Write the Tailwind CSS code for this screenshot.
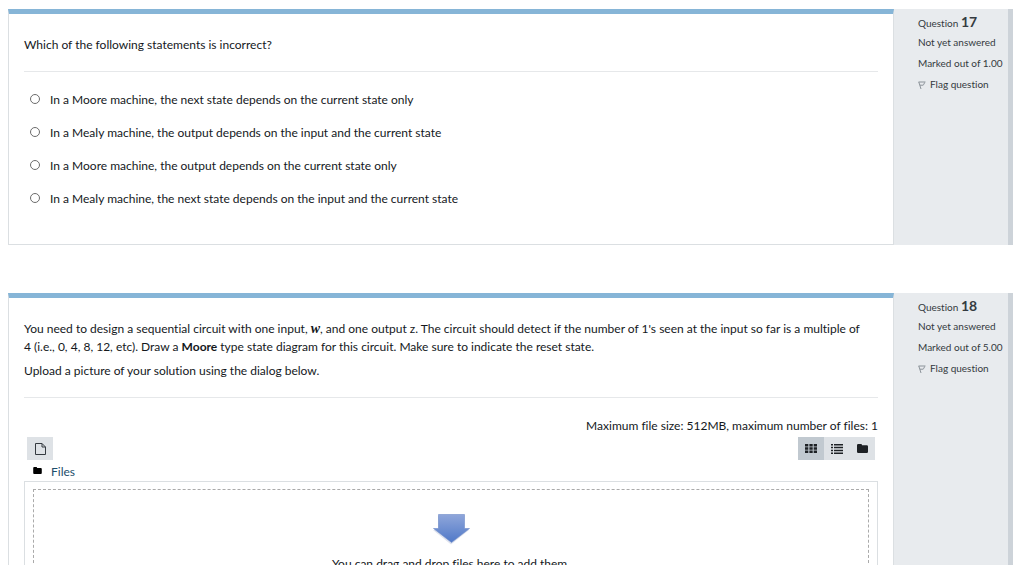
<!DOCTYPE html>
<html lang="en">
<head>
<meta charset="utf-8">
<title>Quiz</title>
<script src="https://cdn.jsdelivr.net/npm/@tailwindcss/browser@4"></script>
</head>
<body class="h-screen overflow-hidden bg-white font-[Lato,'Open_Sans',sans-serif] text-[12px] leading-[18px] text-[#14181c] [font-variant-ligatures:none]">
<main class="flex flex-col gap-12 pt-[9px] pr-[11px] pl-2">

  <section class="flex">
    <div class="min-w-0 flex-1 border border-t-5 border-[#dbdfe2] border-t-[#86b5d7] px-[15px] pt-[22px] pb-9">
      <p>Which of the following statements is incorrect?</p>
      <hr class="mt-[17px] border-[#e6e8ea]">
      <fieldset class="mt-[19px] flex flex-col gap-[15px] pl-[6px]">
        <label class="flex items-start gap-[10px]"><input type="radio" name="q17" class="mt-[3px] size-[10px] shrink-0 appearance-none rounded-full border border-[#6c6c6c] bg-white checked:bg-[#6c6c6c]">In a Moore machine, the next state depends on the current state only</label>
        <label class="flex items-start gap-[10px]"><input type="radio" name="q17" class="mt-[3px] size-[10px] shrink-0 appearance-none rounded-full border border-[#6c6c6c] bg-white checked:bg-[#6c6c6c]">In a Mealy machine, the output depends on the input and the current state</label>
        <label class="flex items-start gap-[10px]"><input type="radio" name="q17" class="mt-[3px] size-[10px] shrink-0 appearance-none rounded-full border border-[#6c6c6c] bg-white checked:bg-[#6c6c6c]">In a Moore machine, the output depends on the current state only</label>
        <label class="flex items-start gap-[10px]"><input type="radio" name="q17" class="mt-[3px] size-[10px] shrink-0 appearance-none rounded-full border border-[#6c6c6c] bg-white checked:bg-[#6c6c6c]">In a Mealy machine, the next state depends on the input and the current state</label>
      </fieldset>
    </div>
    <aside class="w-[119px] shrink-0 border-r-5 border-[#cdd3d9] bg-[#e8ebee] pt-1 pl-6 text-[10px] leading-[21px] whitespace-nowrap text-[#343a40]">
      <h3 class="leading-[17px]">Question <span class="text-[14px] font-bold">17</span></h3>
      <p>Not yet answered</p>
      <p>Marked out of 1.00</p>
      <a href="#" class="flex items-center gap-1"><svg class="size-2" viewBox="0 0 8 8" fill="none" stroke="#8b9299"><path d="M.8 1L3 8M.5 1H7.500M2 4.200H5Q6 4 6.500 1.500" /></svg>Flag question</a>
    </aside>
  </section>

  <section class="flex">
    <div class="min-w-0 flex-1 border border-t-5 border-[#dbdfe2] border-t-[#86b5d7] px-[15px] pt-[22px] pb-8">
      <p>You need to design a sequential circuit with one input, <i class="font-['Liberation_Serif',serif] text-[14px] leading-none font-bold">w</i>, and one output z. The circuit should detect if the number of 1's seen at the input so far is a multiple of 4&nbsp;(i.e., 0, 4, 8, 12, etc). Draw a <b>Moore</b> type state diagram for this circuit. Make sure to indicate the reset state.</p>
      <p class="mt-[6px]">Upload a picture of your solution using the dialog below.</p>
      <hr class="mt-[17px] border-[#e6e8ea]">
      <p class="mt-[19px] text-right">Maximum file size: 512MB, maximum number of files: 1</p>
      <div class="mt-[2px] flex justify-between pr-[3px] pl-[3px]">
        <button type="button" aria-label="Add file" class="flex h-[23px] w-[26px] items-center justify-center bg-[#dee2e6]"><svg class="h-3 w-[11px]" viewBox="0 0 11 12" fill="none" stroke="#343a40"><path d="M.5.5H7L10.500 4V11.500H.5ZM7 .5V4H10.500"/></svg></button>
        <div class="flex bg-[#dee2e6]">
          <button type="button" aria-label="Icon view" class="flex h-[23px] w-[26px] items-center justify-center bg-[#c1c9d0]"><svg class="h-[9px] w-3" viewBox="0 0 12 9" fill="#1d2125"><path d="M0 0h3.300v2.500H0zM4.400 0h3.300v2.500H4.400zM8.700 0H12v2.500H8.700zM0 3.300h3.300v2.500H0zM4.400 3.300h3.300v2.500H4.400zM8.700 3.300H12v2.500H8.700zM0 6.500h3.300V9H0zM4.400 6.500h3.300V9H4.400zM8.700 6.500H12V9H8.700z"/></svg></button>
          <button type="button" aria-label="List view" class="flex h-[23px] w-[25px] items-center justify-center"><svg class="h-[10px] w-3" viewBox="0 0 12 10" fill="#1d2125"><path d="M0 0h2v1.500H0zM3 0h9v1.500H3zM0 2.800h2v1.500H0zM3 2.800h9v1.500H3zM0 5.700h2v1.500H0zM3 5.700h9v1.500H3zM0 8.500h2V10H0zM3 8.500h9V10H3z"/></svg></button>
          <button type="button" aria-label="Folder view" class="flex h-[23px] w-[26px] items-center justify-center"><svg class="h-[9px] w-[11px]" viewBox="0 0 11 9" fill="#1d2125"><path d="M1.200 0H4Q5 0 5 1.300H9.800Q11 1.300 11 2.500V7.800Q11 9 9.800 9H1.200Q0 9 0 7.800V1.200Q0 0 1.200 0Z"/></svg></button>
        </div>
      </div>
      <div class="mt-[3px] flex items-start gap-[9px] pl-[9px]">
        <svg class="mt-1 h-[7px] w-[9px]" viewBox="0 0 11 9" fill="#000"><path d="M1.200 0H4Q5 0 5 1.300H9.800Q11 1.300 11 2.500V7.800Q11 9 9.800 9H1.200Q0 9 0 7.800V1.200Q0 0 1.200 0Z"/></svg>
        <a href="#" class="text-[#1d4e6b]">Files</a>
      </div>
      <div class="border border-[#dbdfe2] px-2 py-[7px]">
        <div class="flex h-[140px] flex-col items-center border border-dashed border-[#aaaaaa] pt-[23px]">
          <svg class="h-8 w-10" viewBox="0 0 40 32"><defs><linearGradient id="arrow" x2="0" y2="1"><stop stop-color="#8fa6da"/><stop offset="1" stop-color="#5079c8"/></linearGradient></defs><path d="M7 3H33V17H38L20 31.500 2 17H7Z" fill="#dfe3ee"/><path d="M7.500 1.500H33.500V15.500H38.500L20.500 29.500 2.500 15.500H7.500Z" fill="url(#arrow)" stroke="#6f8bc8" stroke-width=".6"/></svg>
          <p class="mt-[10px]">You can drag and drop files here to add them.</p>
        </div>
      </div>
    </div>
    <aside class="w-[119px] shrink-0 border-r-5 border-[#cdd3d9] bg-[#e8ebee] pt-1 pl-6 text-[10px] leading-[21px] whitespace-nowrap text-[#343a40]">
      <h3 class="leading-[17px]">Question <span class="text-[14px] font-bold">18</span></h3>
      <p>Not yet answered</p>
      <p>Marked out of 5.00</p>
      <a href="#" class="flex items-center gap-1"><svg class="size-2" viewBox="0 0 8 8" fill="none" stroke="#8b9299"><path d="M.8 1L3 8M.5 1H7.500M2 4.200H5Q6 4 6.500 1.500" /></svg>Flag question</a>
    </aside>
  </section>
</main>
</body>
</html>
